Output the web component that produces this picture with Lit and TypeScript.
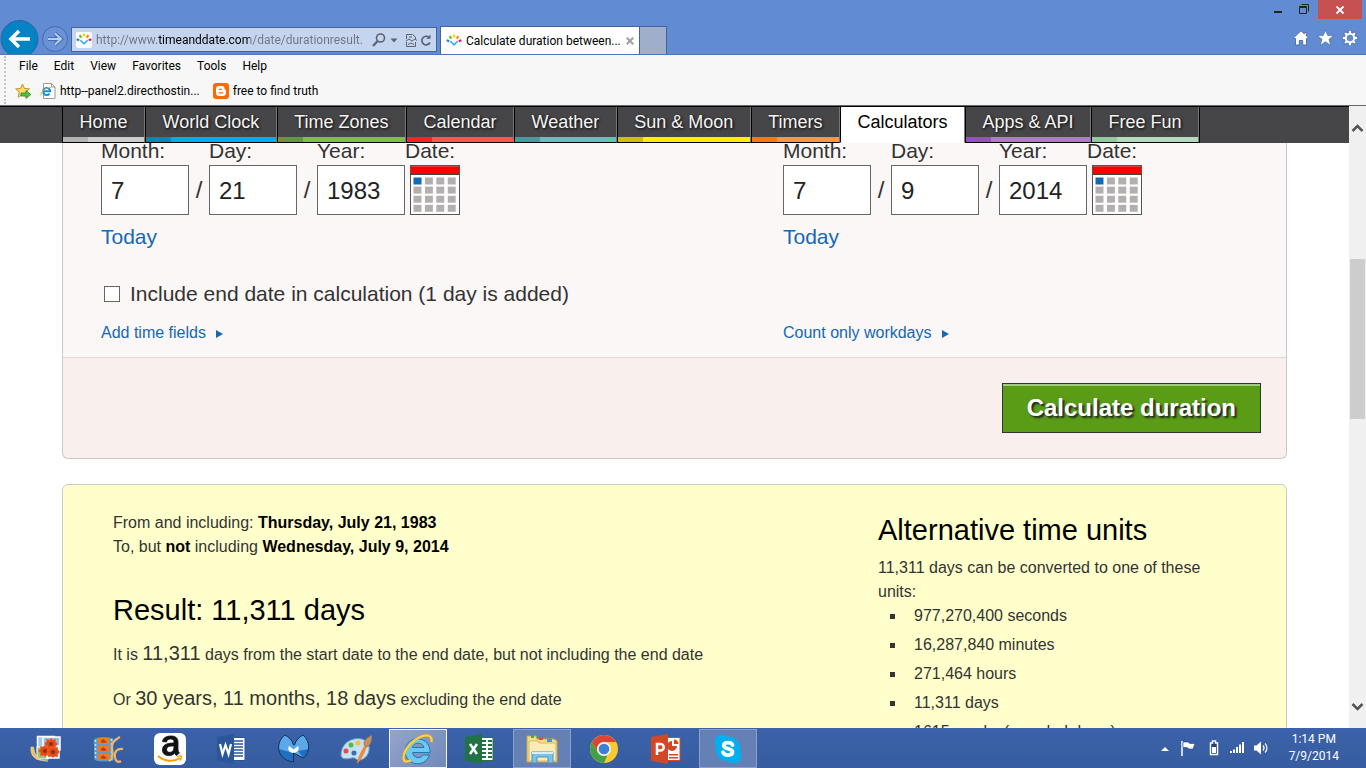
import { LitElement, html, css } from "lit";
import { customElement, state } from "lit/decorators.js";
import { classMap } from "lit/directives/class-map.js";

const FAVICON = html`<svg width="16" height="16" viewBox="0 0 16 16" aria-hidden="true">
  <rect width="16" height="16" rx="2" fill="#f9fafb" />
  <path d="M3.6 3.2l1.7 2.4" stroke="#76b82a" stroke-width="2.2" />
  <path d="M8 1.6v2.8" stroke="#f6d500" stroke-width="2.4" />
  <path d="M12.4 3.2l-1.7 2.4" stroke="#f08a1d" stroke-width="2.2" />
  <path d="M.6 7.2l2.7 1" stroke="#1c8fcb" stroke-width="2.2" />
  <path d="M15.4 7.2l-2.7 1" stroke="#e6147d" stroke-width="2.2" />
  <path d="M4.3 8.3L8 11.8l3.7-3.5" fill="none" stroke="#29abe2" stroke-width="1.5" />
</svg>`;

const NAV = [
  { name: "Home", dark: "#b2b2b2", light: "#cccccc" },
  { name: "World Clock", dark: "#0088bf", light: "#00aeef" },
  { name: "Time Zones", dark: "#669933", light: "#82bf41" },
  { name: "Calendar", dark: "#ff2020", light: "#fe5550" },
  { name: "Weather", dark: "#3f9f9f", light: "#62c0bf" },
  { name: "Sun & Moon", dark: "#ccc000", light: "#fff000" },
  { name: "Timers", dark: "#ff7708", light: "#ff9640" },
  { name: "Calculators", dark: "#ffffff", light: "#ffffff", active: true },
  { name: "Apps & API", dark: "#9352c4", light: "#af7ad4" },
  { name: "Free Fun", dark: "#92c9a0", light: "#b5d9bd" },
];

@customElement("browser-chrome")
class BrowserChrome extends LitElement {
  static styles = css`
    :host { display: block; flex: none; font: 12px/16px Roboto, "Open Sans", sans-serif; color: #000; }
    button { font: inherit; color: inherit; border: 0; background: none; padding: 0; margin: 0; display: flex; align-items: center; }
    svg { display: block; flex: none; }
    .frame { background: #618cd3; border-bottom: 1px solid #4f76b8; }
    .title { display: flex; justify-content: flex-end; height: 18px; padding-right: 4px; }
    .title button { justify-content: center; width: 27px; height: 18px; }
    .title .close { width: 44px; height: 19px; background: #c75050; }
    .bar { display: flex; height: 36px; align-items: flex-end; overflow: hidden; }
    .round { height: 36px; }
    .address { display: flex; align-items: center; width: 366px; height: 25px; margin: 0 3px 2px; padding: 0 4px; gap: 4px; border: 1px solid #42639c; background: #c6d5ef; box-sizing: border-box; }
    .address input {
      flex: 1; min-width: 0; height: 20px; border: 0; outline: 0; padding: 0;
      font: inherit; color: transparent;
      background: linear-gradient(90deg, #6f7682 62px, #000 62px, #000 154px, #6f7682 154px) text;
    }
    .tab { display: flex; align-items: center; height: 28px; box-sizing: border-box; width: 200px; padding: 0 5px 0 5px; gap: 4px; background: #fff; border: 1px solid #42639c; border-bottom: 0; }
    .tab span { flex: 1; white-space: nowrap; }
    .newtab { width: 27px; height: 28px; box-sizing: border-box; background: #9faecb; border: 1px solid #42639c; border-width: 1px 1px 0 0; }
    .tools { display: flex; gap: 8px; margin-left: auto; height: 32px; padding-right: 8px; }
    .tools button { height: 32px; align-items: center; }
    .menus { background: #f7f7f7; border-bottom: 1px solid #666; padding: 1px 4px 1px; }
    .grip { border-left: 2px dotted #c4c4c4; padding-left: 9px; height: 48px; }
    .row { display: flex; align-items: center; height: 20px; gap: 16px; padding-left: 4px; }
    .favs { height: 28px; padding: 1px 0 0; gap: 9px; }
    .favs a { display: flex; align-items: center; gap: 4px; color: #000; text-decoration: none; margin-right: 4px; white-space: nowrap; }
  `;

  render() {
    return html`
      <header class="frame">
        <div class="title">
          <button aria-label="Minimize"><svg width="27" height="18"><path d="M10 12h8" stroke="#222" stroke-width="2" /></svg></button>
          <button aria-label="Restore"><svg width="27" height="18"><g fill="none" stroke="#222"><path d="M8.500 7.500h7v6h-7z M8 6.500h8" /><path d="M10.500 4.500h7v7" /></g></svg></button>
          <button class="close" aria-label="Close"><svg width="10" height="10" viewBox="0 0 10 10"><path d="M1.500 1.500l7 7M8.500 1.500l-7 7" stroke="#fff" stroke-width="1.800" /></svg></button>
        </div>
        <div class="bar">
          <button class="round" aria-label="Back">
            <svg width="40" height="36"><circle cx="19.500" cy="21" r="18.500" fill="#0284c4" stroke="#355f9b" /><path d="M30 21H12M19 13l-8 8 8 8" fill="none" stroke="#fff" stroke-width="3.500" /></svg>
          </button>
          <button class="round" aria-label="Forward">
            <svg width="28" height="36"><circle cx="15" cy="21" r="12.500" fill="#6a92d6" stroke="#456cae" /><path d="M8 21h12M15 15.500l6 5.500-6 5.500" fill="none" stroke="#456cae" stroke-width="4" /><path d="M8 21h12M15 15.500l6 5.500-6 5.500" fill="none" stroke="#b8cdf0" stroke-width="2" /></svg>
          </button>
          <div class="address">
            ${FAVICON}
            <input aria-label="Address" value="http://www.timeanddate.com/date/durationresult." />
            <svg width="60" height="16" viewBox="0 0 60 16" fill="none" stroke="#5b6472">
              <circle cx="8.500" cy="6" r="4" stroke-width="1.600" /><path d="M5.600 9L1 14" stroke-width="2.200" />
              <path d="M18.500 6.500h7l-3.500 4z" fill="#5b6472" stroke="none" />
              <path d="M34.500 7V2.500h6l3 2.500v2M34.500 10v4.500h9V10M34 9l3-2 3 2 3-2 2 1.500M36 12.500l3-1.500 3 1.500M37 5h3" />
              <path d="M58 10.500a4.300 4.300 0 1 1-1-5.200" stroke-width="1.700" /><path d="M58.500 2.500v4.300h-4.300z" fill="#5b6472" stroke="none" />
            </svg>
          </div>
          <div class="tab">
            ${FAVICON}<span>Calculate duration between...</span>
            <button aria-label="Close tab"><svg width="8" height="8" viewBox="0 0 8 8"><path d="M.7.7l6.600 6.600M7.300.7L.7 7.300" stroke="#a0a0a0" stroke-width="2" /></svg></button>
          </div>
          <button class="newtab" aria-label="New tab"></button>
          <div class="tools">
            <button aria-label="Home"><svg width="16" height="16" viewBox="0 0 16 16"><path d="M8 .8L.7 7.800l1 1.200.8-.6V15h3.800v-4.500h3.400V15h3.800V8.400l.8.6 1-1.200-2-1.900V2.500h-2v1.400z" fill="#fff" stroke="#3f5f98" stroke-width=".8" /></svg></button>
            <button aria-label="Favorites"><svg width="17" height="16" viewBox="0 0 17 16"><path d="M8.500.2l2.300 5.400h5.900l-4.700 3.700 1.800 6.200-5.300-3.700-5.300 3.700L5 9.300.3 5.600h5.900z" fill="#fff" stroke="#3f5f98" stroke-width=".6" /></svg></button>
            <button aria-label="Settings"><svg width="16" height="16" viewBox="0 0 16 16"><g stroke="#3f5f98" stroke-width="3.600"><path d="M8 .4v15.200M.4 8h15.200M2.600 2.600l10.800 10.800M13.400 2.600L2.600 13.400" /></g><g stroke="#fff" stroke-width="2.400"><path d="M8 .8v14.400M.8 8h14.400M3 3l10 10M13 3L3 13" /></g><circle cx="8" cy="8" r="4.200" fill="#618cd3" stroke="#fff" stroke-width="2" /></svg></button>
          </div>
        </div>
      </header>
      <div class="menus"><div class="grip">
        <nav class="row">${["File", "Edit", "View", "Favorites", "Tools", "Help"].map((m) => html`<button>${m}</button>`)}</nav>
        <div class="row favs">
          <button aria-label="Add to favorites"><svg width="16" height="16" viewBox="0 0 16 16"><path d="M7.500 1l2 4.500 5 .4-3.800 3.300 1.200 5-4.400-2.600-4.400 2.600 1.200-5L.6 5.900l5-.4z" fill="#fbdc6a" stroke="#c2932b" /><path d="M6 10h5V7.500l4.800 4-4.800 4V13H6z" fill="#4fc242" stroke="#2c8a26" stroke-width=".8" /></svg></button>
          <a href="#"><svg width="16" height="16" viewBox="0 0 16 16"><path d="M3.500.5h8l3.500 3.500v11.500H3.500z" fill="#fff" stroke="#999" /><path d="M11.500.5V4H15" fill="none" stroke="#999" /><path d="M9.600 10.600A3.600 3.600 0 1 1 10.300 8.300H3.500" fill="none" stroke="#1c8ddb" stroke-width="2" /><path d="M1 12.500C-.5 10 7 3 11 4.500" fill="none" stroke="#efb92d" stroke-width="1" /></svg>http--panel2.directhostin...</a>
          <a href="#"><svg width="16" height="16" viewBox="0 0 16 16"><rect width="16" height="16" rx="3" fill="#ff6a00" /><path d="M6.200 3h2.600A2.700 2.700 0 0 1 11.500 5.700c0 1.200 1.500.6 1.500 1.800v2.300A3.200 3.200 0 0 1 9.800 13H6.200A3.200 3.200 0 0 1 3 9.800V6.200A3.200 3.200 0 0 1 6.200 3z" fill="#fff" /><path d="M6.200 6.300h2.300M6.200 9.800h3.600" stroke="#ff6a00" stroke-width="1.300" stroke-linecap="round" /></svg>free to find truth</a>
        </div>
      </div></div>`;
  }
}

@customElement("date-picker")
class DatePicker extends LitElement {
  static properties = { month: {}, day: {}, year: {} };
  declare month: string;
  declare day: string;
  declare year: string;

  static styles = css`
    :host { display: block; font: 21px/24px "Liberation Sans", Arial, sans-serif; color: #333; }
    .fields { display: flex; align-items: flex-end; }
    .field { display: flex; flex-direction: column; gap: 6px; }
    label { line-height: 16px; }
    input { width: 88px; height: 50px; box-sizing: border-box; border: 1px solid #666; border-radius: 0; background: #fff; padding: 2px 8px 0 9px; font: 24px/28px "Liberation Sans", Arial, sans-serif; color: #222; }
    .slash { width: 20px; text-align: center; font-size: 24px; line-height: 50px; }
    .cal { width: 50px; height: 50px; padding: 0; margin-left: 5px; border: 0; background: none; }
    .cal svg { display: block; }
    a { display: inline-block; margin-top: 10px; color: #1469b5; text-decoration: none; }
  `;

  render() {
    const cells = Array.from({ length: 16 }, (_, i) => i);
    return html`
      <div class="fields">
        <div class="field"><label for="m">Month:</label><input id="m" .value=${this.month} /></div>
        <span class="slash">/</span>
        <div class="field"><label for="d">Day:</label><input id="d" .value=${this.day} /></div>
        <span class="slash">/</span>
        <div class="field"><label for="y">Year:</label><input id="y" .value=${this.year} /></div>
        <div class="field"><label for="c">Date:</label>
          <button class="cal" id="c" aria-label="Pick a date"><svg width="50" height="50" viewBox="0 0 50 50">
            <rect x=".5" y=".5" width="49" height="49" fill="#fff" stroke="#555" />
            <rect x="1" y="1" width="48" height="8" fill="#f00" /><path d="M1 1.500h48" stroke="#d8403c" /><path d="M0 9.500h50" stroke="#444" />
            ${cells.map((i) => html`<svg x=${3 + (i % 4) * 11.4} y=${12 + Math.floor(i / 4) * 9.1} width="9" height="8"><rect x=".5" y=".5" width="8" height="7" fill=${i ? "#b3afaf" : "#1469b5"} /></svg>`)}
          </svg></button>
        </div>
      </div>
      <a href="#">Today</a>`;
  }
}

@customElement("duration-page")
class DurationPage extends LitElement {
  @state() private includeEnd = false;

  static styles = css`
    :host { display: flex; flex-direction: column; flex: 1; min-width: 0; overflow: hidden; background: #fff; font: 16px/24px "Liberation Sans", Arial, sans-serif; color: #333; }
    a { color: #1469b5; text-decoration: none; }
    .nav { flex: none; height: 36px; padding: 0 62px; background: #464648; border-top: 1px solid #000; }
    .items { display: flex; height: 36px; width: 1138px; }
    .item { flex: 1 1 auto; display: flex; flex-direction: column; text-align: center; border-left: 1px solid #000; border-right: 1px solid #777; border-bottom: 1px solid #000; color: #f4f4f4; font-size: 18px; line-height: 30px; white-space: nowrap; text-shadow: 1px 1px 3px #000; }
    .item span { padding: 0 16px; }
    .item i { display: flex; height: 5px; }
    .item b { width: 25px; }
    .active { background: #fff; border-bottom-color: #fff; color: #000; text-shadow: none; }
    .end { border-left: 1px solid #000; }
    .panel { flex: none; margin: 0 62px 25px; border: 1px solid #c9c9c9; border-top: 0; border-radius: 0 0 6px 6px; background: #f9f0ee; overflow: hidden; }
    .cols { display: grid; grid-template-columns: 682fr 503fr; padding: 0 0 12px 38px; background: #fbf7f6; border-bottom: 1px solid #dcd8d8; }
    .check { grid-column: 1 / -1; display: flex; align-items: center; gap: 10px; height: 24px; margin: 33px 0 15px 3px; font-size: 21px; }
    .check input { appearance: none; width: 16px; height: 16px; margin: 0; border: 1px solid #666; background: #fff; }
    .more::after { content: ""; display: inline-block; margin-left: 10px; border-left: 7px solid #1469b5; border-top: 4px solid transparent; border-bottom: 4px solid transparent; }
    .foot { display: flex; justify-content: flex-end; padding: 25px; }
    .foot button { height: 50px; padding: 0 24px; border: 1px solid #333; box-shadow: inset 0 2px #a3cd7c; background: #5a9c15; color: #fff; font: bold 24px/28px "Liberation Sans", Arial, sans-serif; text-shadow: 2px 2px 2px #222; }
    .result { flex: none; margin: 0 62px; padding: 26px 50px 0; display: grid; grid-template-columns: 765fr 358fr; border: 1px solid #c9c9c9; border-radius: 6px 6px 0 0; background: #ffffcc; }
    h2 { margin: 0; font-size: 29px; line-height: 30px; font-weight: 400; color: #000; }
    p { margin: 0; }
    strong { color: #000; }
    .range { margin-bottom: 36px; }
    .line { margin-top: 15px; line-height: 30px; }
    .line big { font-size: 20px; line-height: 20px; }
    .side h2 { margin: 4px 0 11px; }
    .side ul { margin: 0; padding: 0; list-style: none; display: grid; gap: 5px; }
    .side li { display: flex; align-items: center; gap: 19px; padding-left: 12px; }
    .side li::before { content: ""; width: 5px; height: 5px; background: #333; }
  `;

  render() {
    return html`
      <nav class="nav"><div class="items">
        ${NAV.map((n) => html`<a href="#" class=${classMap({ item: true, active: !!n.active })}><span>${n.name}</span><i style="background:${n.light}"><b style="background:${n.dark}"></b></i></a>`)}
        <div class="end"></div>
      </div></nav>
      <form class="panel" @submit=${(e: Event) => e.preventDefault()}>
        <div class="cols">
          <date-picker month="7" day="21" year="1983"></date-picker>
          <date-picker month="7" day="9" year="2014"></date-picker>
          <label class="check"><input type="checkbox" .checked=${this.includeEnd} @change=${() => (this.includeEnd = !this.includeEnd)} />Include end date in calculation (1 day is added)</label>
          <a class="more" href="#">Add time fields</a>
          <a class="more" href="#">Count only workdays</a>
        </div>
        <div class="foot"><button>Calculate duration</button></div>
      </form>
      <section class="result">
        <div>
          <p>From and including: <strong>Thursday, July 21, 1983</strong></p>
          <p class="range">To, but <strong>not</strong> including <strong>Wednesday, July 9, 2014</strong></p>
          <h2>Result: 11,311 days</h2>
          <p class="line">It is <big>11,311</big> days from the start date to the end date, but not including the end date</p>
          <p class="line">Or <big>30 years, 11 months, 18 days</big> excluding the end date</p>
        </div>
        <div class="side">
          <h2>Alternative time units</h2>
          <p>11,311 days can be converted to one of these units:</p>
          <ul>${["977,270,400 seconds", "16,287,840 minutes", "271,464 hours", "11,311 days", "1615 weeks (rounded down)"].map((u) => html`<li>${u}</li>`)}</ul>
        </div>
      </section>`;
  }
}

const flower = (x: number, y: number) => html`<svg x=${x} y=${y} width="14" height="12" viewBox="0 0 14 12"><ellipse cx="7" cy="6" rx="6" ry="5" fill="#f07a25" /><path d="M7 0l1.500 2.500L12 1l-1 3 3 2-3 1.500 1 3.500-3.500-1L7 12l-1.500-2L2 11l1-3.500L0 6l3-2-1-3 3.500 1.500z" fill="#e8491c" /><circle cx="7" cy="6" r="2" fill="#8d2f12" /></svg>`;

const APPS = [
  { name: "Photo Gallery", icon: html`<svg width="32" height="32"><rect x="7.500" y="3.500" width="17" height="14" fill="#a8c8e8" stroke="#fff" stroke-width="1.500" /><rect x="13" y="4" width="17" height="13" fill="#8fc0e8" stroke="#fff" stroke-width="1.500" /><rect x="7" y="14" width="11" height="12" fill="#9cc47c" stroke="#fff" /><rect x="17" y="13" width="12" height="12" fill="#b0cfea" stroke="#fff" stroke-width="1.500" />${flower(14, 5)}${flower(8, 12)}${flower(16, 13)}<path d="M1 14c-1 9 4 14 17 14C9 28 5 24 3.500 14z" fill="#f1be63" stroke="#fbe0a0" stroke-width=".6" /></svg>` },
  { name: "Movie Maker", icon: html`<svg width="32" height="32"><path d="M1 6c5-3 14-3 21-1v23c-7 1-16 2-20-1z" fill="#5c9ccb" stroke="#2c5f92" /><path d="M3.500 7v20M19.500 6v21" stroke="#c9e4f6" stroke-width="1.500" stroke-dasharray="2 2" /><path d="M6 5h11v6H6zM6 13h11v6H6zM6 21h11v6H6z" fill="#ee7a22" /><path d="M8 9l3-3 4 3-3 1zM8 17l3-3 4 3-3 1zM8 25l3-3 4 3-3 1z" fill="#c93a12" /><path d="M28 4c-6 3-9 7-8 12 1 6 0 11-3 12M31 16c-6-1-9 3-8 8 0 4 3 6 6 4" fill="none" stroke="#e9b765" stroke-width="2.200" /></svg>` },
  { name: "Amazon", icon: html`<svg width="32" height="32"><rect width="32" height="32" rx="6" fill="#fff" /><path d="M20 10v-1c0-2-1-3-3.500-3S13 7 12.500 9L8.500 8.500C9 5 12 3 17 3c5 0 7 2.500 7 6v7c0 2 .6 3 1.500 4l-3.200 2.400-1.800-2.100c-1.500 1.600-3 2.300-5.500 2.300-4 0-6.500-2-6.500-5.500C8.500 12 12 10 20 10zm0 3c-5-.2-7.300.8-7.300 3.500 0 1.800 1 2.800 2.800 2.800C19 19.300 20 17 20 13z" fill="#111" stroke="#111" stroke-width=".8" /><path d="M4 23c7 6 16 6 22 2" fill="none" stroke="#f90" stroke-width="2" /><path d="M23 23.500c3-1 5-.5 4.500 0s-.2 2-1.500 4" fill="none" stroke="#f90" stroke-width="1.400" /></svg>` },
  { name: "Word", icon: html`<svg width="32" height="32"><rect x="16" y="4.500" width="13" height="23" fill="#fff" stroke="#2b579a" /><path d="M18 8h9M18 11h9M18 14h9M18 17h9M18 20h9M18 23h9" stroke="#2b579a" stroke-width="1.500" /><path d="M1 4l17-3v30L1 28z" fill="#2b579a" /><path d="M4 11l2.500 10L9.500 12l3 9L15 11" fill="none" stroke="#fff" stroke-width="2.200" /></svg>` },
  { name: "Malwarebytes", icon: html`<svg width="32" height="32"><path d="M7 2C-3 9-2 27 15.500 29v-9l10 5C33 18 32 8 25 2c-4 2-7 5-8.500 10h-1C14 7 11 4 7 2z" fill="#5aa8ea" /><path d="M1 16c0 7 5 12 14.500 13v-9zM20 18l5.500 7c3-3 5-6 5-9z" fill="#1f6fc2" /><path d="M11 13l4.500 3.500L20 13c2 3-.5 7-4.500 7S9 16 11 13z" fill="#fff" /><path d="M7 2C-3 9-2 27 15.500 29v-9l10 5C33 18 32 8 25 2c-4 2-7 5-8.500 10h-1C14 7 11 4 7 2z" fill="none" stroke="#18304f" /></svg>` },
  { name: "Paint", icon: html`<svg width="32" height="32"><path d="M3 14C8 5 21 3 27 9c5 6 1 17-7 18-4 1-4-3-8-2S1 27 1 22c0-3 1-6 2-8z" fill="#c5e1f3" stroke="#6a9fc5" /><circle cx="6" cy="18" r="2.500" fill="#e54a43" /><circle cx="11" cy="12" r="2.500" fill="#57b947" /><circle cx="18" cy="10" r="2.500" fill="#f3c33c" /><circle cx="14" cy="20" r="2.500" fill="#3d6bb5" /><path d="M17 31c0-5 4-13 8-19l2 1c-2 7-6 14-10 18z" fill="#ee8b36" /><path d="M24 12c-1-5 4-8 8-10 0 5-1 10-5 12z" fill="#c29163" stroke="#8d653f" stroke-width=".6" /></svg>` },
  { name: "Internet Explorer", mode: "current", icon: html`<svg width="32" height="32"><path d="M28 19.500H10.500a6 6 0 0 0 11 2.500h6A12.500 12.500 0 1 1 28 19.500zM10.500 14.500h11.500a6 6 0 0 0-11.500 0z" fill="#6bcaf2" stroke="#2277b4" /><path d="M9 27C-1 33-1 21 9 10.500 19 1 31-1 29.500 9" fill="none" stroke="#d7a522" stroke-width="2.800" /><path d="M9 27C-1 33-1 21 9 10.500 19 1 31-1 29.500 9" fill="none" stroke="#f8d445" stroke-width="2" /></svg>` },
  { name: "Excel", icon: html`<svg width="32" height="32"><rect x="16" y="4.500" width="13" height="23" fill="#fff" stroke="#217346" /><path d="M18 8h4M24 8h4M18 12h4M24 12h4M18 16h4M24 16h4M18 20h4M24 20h4M18 24h4M24 24h4" stroke="#217346" stroke-width="2" /><path d="M1 4l17-3v30L1 28z" fill="#217346" /><path d="M6 11l7 10M13 11L6 21" stroke="#fff" stroke-width="2.500" /></svg>` },
  { name: "File Explorer", mode: "open", icon: html`<svg width="32" height="32"><path d="M1 3h9l1 3h17l3 2v21H1z" fill="#f4dc8e" stroke="#c9a34a" /><path d="M3 8h9l1 2h17v18H3z" fill="#fbecb5" stroke="#dbb960" /><path d="M5 2h3v3H5z" fill="#32bd39" /><path d="M13 4h4v3h-4z" fill="#d9552d" /><path d="M21 6h5v3h-5z" fill="#35a0dd" /><path d="M6 30V19h21v11h-5v-6H11v6z" fill="#7cc3e8" stroke="#4a94c2" /><path d="M6 20h21" stroke="#d4f0fd" stroke-width="2" /></svg>` },
  { name: "Chrome", icon: html`<svg width="32" height="32"><circle cx="16" cy="16" r="14" fill="#f8ca2c" /><path d="M3.900 9A14 14 0 0 1 28.100 9H16a7 7 0 0 0-6 10.500z" fill="#db4437" /><path d="M3.900 9l6.100 10.500a7 7 0 0 0 9.500 2.500L16 30A14 14 0 0 1 3.900 9z" fill="#43a047" /><circle cx="16" cy="16" r="7" fill="#f2f2f2" /><circle cx="16" cy="16" r="5.300" fill="#3d7fd2" /></svg>` },
  { name: "PowerPoint", icon: html`<svg width="32" height="32"><rect x="16" y="4.500" width="14" height="23" fill="#fff" stroke="#d24726" /><path d="M22 8a5 5 0 1 0 5 5h-5zM24 6.500V11h4.500A4.500 4.500 0 0 0 24 6.500zM19 21h9v1.500h-9zM19 24h9v1.500h-9z" fill="#d24726" /><path d="M1 4l17-3v30L1 28z" fill="#d24726" /><path d="M7 22V11h3.500a3 3 0 0 1 0 6.500H7" fill="none" stroke="#fff" stroke-width="2.500" /></svg>` },
  { name: "Skype", mode: "open", icon: html`<svg width="32" height="32"><circle cx="16" cy="16" r="12.500" fill="#00aff0" /><circle cx="10" cy="9" r="7.500" fill="#00aff0" /><circle cx="22" cy="23" r="7.500" fill="#00aff0" /><path d="M20.500 12c-1-3-8.500-3.500-8.700.4C11.800 16.500 20.500 15 20.500 19c0 4-8.500 4-9.500.3" fill="none" stroke="#fff" stroke-width="3.800" stroke-linecap="round" /></svg>` },
];

@customElement("task-bar")
class TaskBar extends LitElement {
  static styles = css`
    :host { flex: none; display: flex; align-items: stretch; height: 40px; box-sizing: border-box; padding: 0 27px 0 17px; background: linear-gradient(#3b62aa, #375c9f); color: #fff; font: 12px/17px Roboto, "Open Sans", sans-serif; }
    button { border: 0; background: none; padding: 0; color: inherit; font: inherit; }
    svg { display: block; }
    .apps { display: flex; gap: 4px; padding-top: 1px; }
    .app { width: 58px; display: flex; align-items: center; justify-content: center; border: 1px solid transparent; }
    .open { background: #6480b4; border-color: #8ba0ca; }
    .current { background: linear-gradient(135deg, #94a3cb, #7289ba); border-color: #f4f6fa; }
    .tray { display: flex; align-items: center; gap: 8px; margin-left: auto; }
    .clock { margin-left: 11px; text-align: center; }
  `;

  render() {
    return html`
      <div class="apps">${APPS.map((a) => html`<button class="app ${a.mode ?? ""}" aria-label=${a.name}>${a.icon}</button>`)}</div>
      <div class="tray">
        <button aria-label="Show hidden icons"><svg width="12" height="16"><path d="M2 11h8L6 7z" fill="#fff" /></svg></button>
        <button aria-label="Action Center"><svg width="20" height="18"><path d="M3 2v15" stroke="#fff" stroke-width="1.500" /><path d="M4 3h5l2 1.500h5l-2 5.500h-4L8 8.500H4z" fill="#fff" stroke="#23406f" stroke-width=".6" /></svg></button>
        <button aria-label="Battery"><svg width="14" height="18"><path d="M3.500 4h2V2h3v2h2v11.500h-7z" fill="#23406f" stroke="#fff" stroke-width="1.500" /><path d="M5 8h4v6H5z" fill="#fff" /></svg></button>
        <button aria-label="Network"><svg width="16" height="18"><path d="M1 12h2v2H1zM4 10.500h2V14H4zM7 8h2v6H7zM10 5.500h2V14h-2zM13 3h2v11h-2z" fill="#fff" /></svg></button>
        <button aria-label="Volume"><svg width="17" height="18"><path d="M1 6.500h2.500L8 2.500v13l-4.500-4H1z" fill="#fff" /><path d="M10 6.500c1.300 1.500 1.300 3.500 0 5M12 4.500c2.600 2.500 2.600 6.500 0 9" fill="none" stroke="#fff" stroke-width="1.200" /></svg></button>
        <div class="clock">1:14 PM<br />7/9/2014</div>
      </div>`;
  }
}

@customElement("app-root")
class AppRoot extends LitElement {
  static styles = css`
    :host { display: flex; flex-direction: column; height: 100vh; overflow: hidden; }
    .view { flex: 1; min-height: 0; display: flex; }
    .scroll { flex: none; width: 17px; background: #f0f0f0; display: grid; grid-template-rows: 44px 109fr 160fr 265fr 44px; }
    .scroll svg { display: block; align-self: center; justify-self: center; }
    .thumb { grid-row: 3; margin: 0 1px; background: #cdcdcd; }
    .down { grid-row: 5; }
  `;

  render() {
    return html`
      <browser-chrome></browser-chrome>
      <div class="view">
        <duration-page></duration-page>
        <div class="scroll" aria-hidden="true">
          <svg width="13" height="9"><path d="M1.500 7l5-5 5 5" fill="none" stroke="#555" stroke-width="2.500" /></svg>
          <div class="thumb"></div>
          <svg class="down" width="13" height="9"><path d="M1.500 2l5 5 5-5" fill="none" stroke="#555" stroke-width="2.500" /></svg>
        </div>
      </div>
      <task-bar></task-bar>`;
  }
}
